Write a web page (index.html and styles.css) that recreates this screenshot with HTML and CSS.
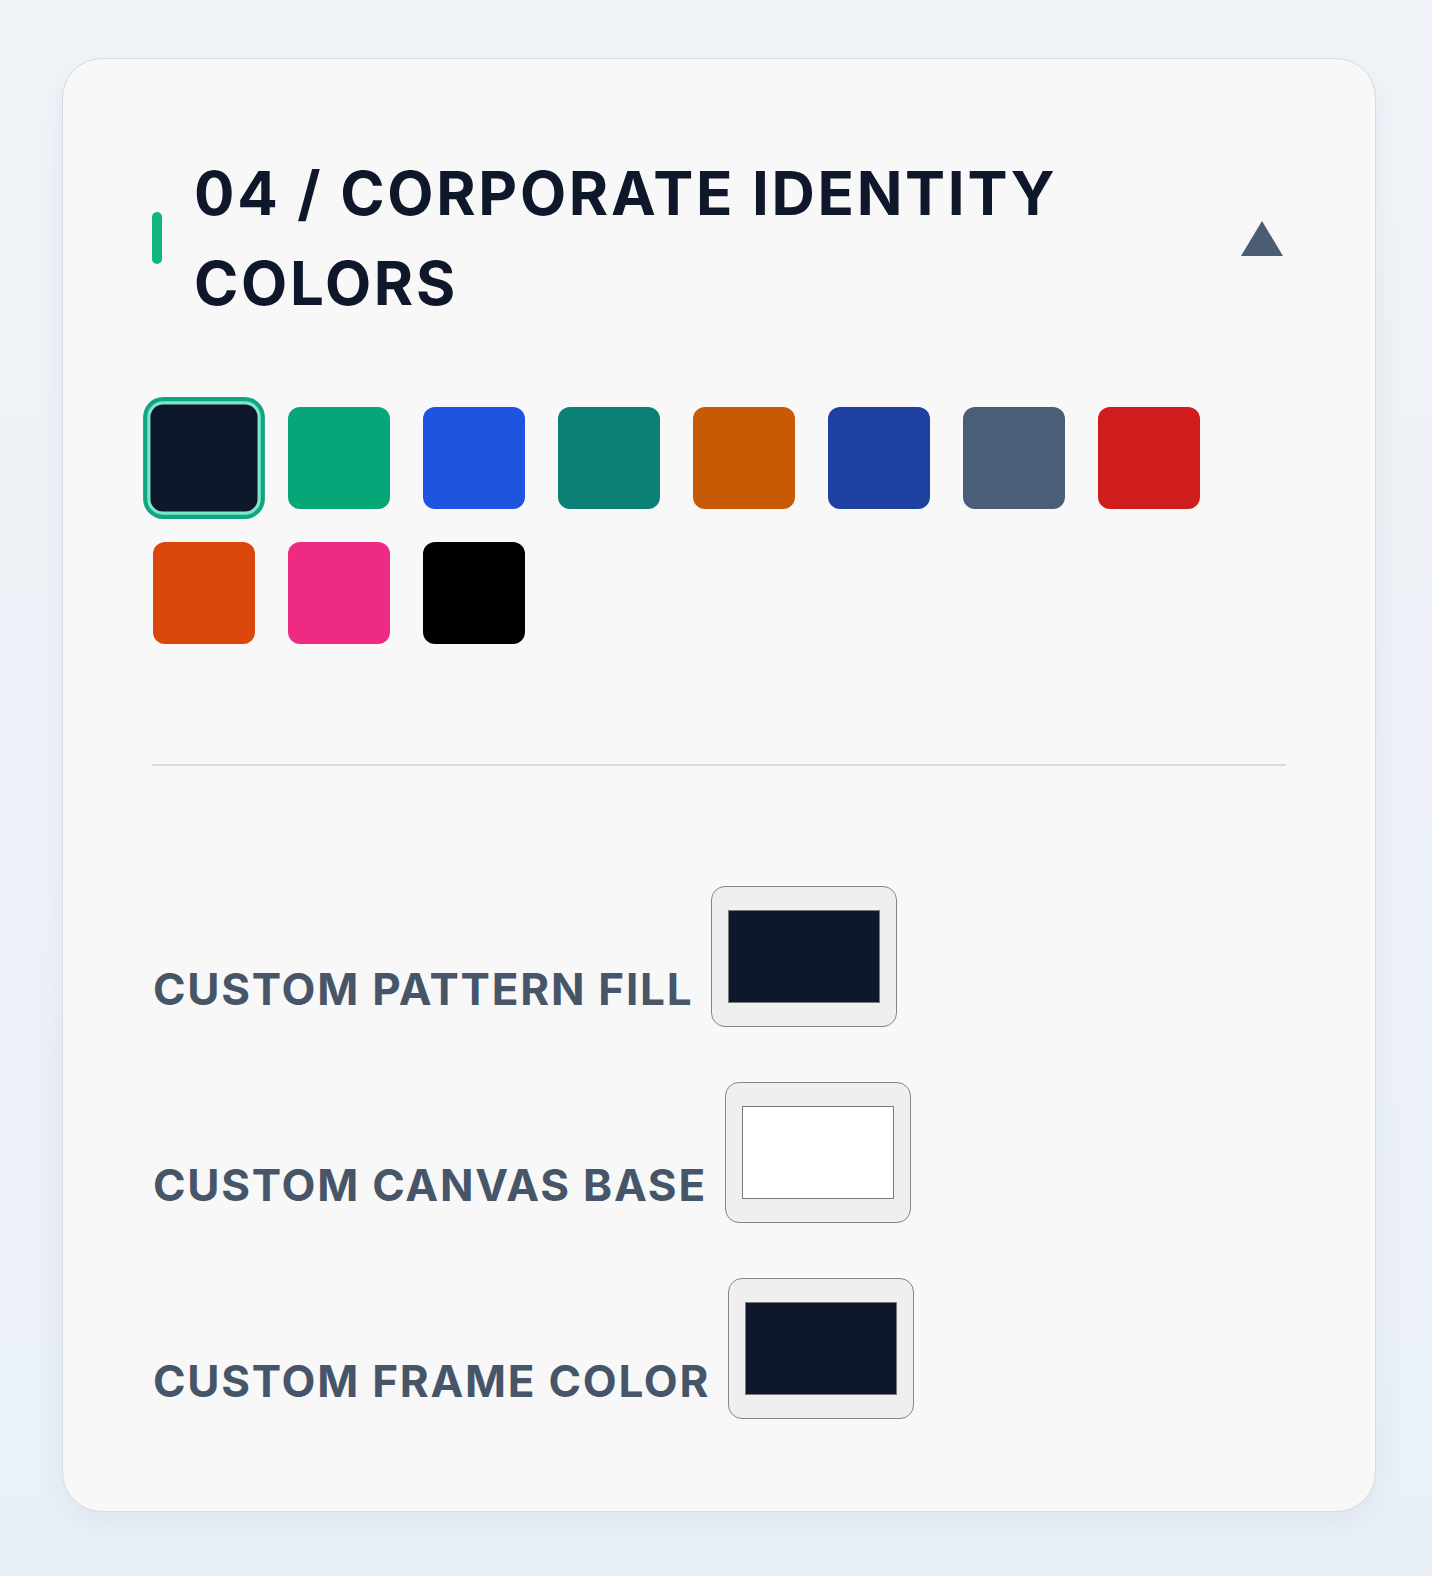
FILE: index.html
```html
<!DOCTYPE html>
<html lang="en">
<head>
  <meta charset="UTF-8">
  <meta name="viewport" content="width=device-width, initial-scale=1.0">
  <title>Corporate Identity Colors</title>
  <link rel="stylesheet" href="styles.css">
</head>
<body>
  <main class="page">
    <section class="card">
      <header class="card-head">
        <span class="accent"></span>
        <h2 class="title">04 / CORPORATE IDENTITY COLORS</h2>
        <button type="button" class="toggle" aria-label="Collapse section">
          <svg width="42" height="35" viewBox="0 0 42 35"><polygon points="21,0 42,35 0,35" fill="#4b5d75"/></svg>
        </button>
      </header>

      <div class="swatches">
        <button type="button" class="swatch active" style="background: #0f172a;"></button>
        <button type="button" class="swatch" style="background: #07a679;"></button>
        <button type="button" class="swatch" style="background: #1d54e0;"></button>
        <button type="button" class="swatch" style="background: #0b8175;"></button>
        <button type="button" class="swatch" style="background: #c85a06;"></button>
        <button type="button" class="swatch" style="background: #1e40a0;"></button>
        <button type="button" class="swatch" style="background: #4b5e77;"></button>
        <button type="button" class="swatch" style="background: #cf1d1d;"></button>
        <button type="button" class="swatch" style="background: #d9480a;"></button>
        <button type="button" class="swatch" style="background: #ee2a83;"></button>
        <button type="button" class="swatch" style="background: #000000;"></button>
      </div>

      <hr class="divider">

      <div class="custom-list">
        <label class="custom-row">
          <span class="custom-label">CUSTOM PATTERN FILL</span>
          <span class="picker"><span class="picker-fill" style="background: #0f172a;"></span></span>
        </label>
        <label class="custom-row">
          <span class="custom-label">CUSTOM CANVAS BASE</span>
          <span class="picker"><span class="picker-fill" style="background: #ffffff;"></span></span>
        </label>
        <label class="custom-row">
          <span class="custom-label">CUSTOM FRAME COLOR</span>
          <span class="picker"><span class="picker-fill" style="background: #0f172a;"></span></span>
        </label>
      </div>
    </section>
  </main>
</body>
</html>
```
FILE: styles.css
```css
body {
  margin: 0;
  padding: 0;
  font-family: Inter, "Noto Sans", sans-serif;
  background: linear-gradient(180deg, #f0f3f7 0%, #eaf0f8 100%);
  color: #0f172a;
  min-height: 1576px;
}
.page {
  padding: 58px 56px 64px 62px;
}
.card {
  background: #f8f8f8;
  border: 1px solid #d6dbe3;
  border-radius: 40px;
  padding: 89px 89px 92px 89px;
  box-shadow: 0 12px 30px rgba(30, 50, 90, 0.06);
}
.card-head {
  display: flex;
  align-items: center;
}
.accent {
  width: 10px;
  height: 52px;
  border-radius: 5px;
  background: #10b47f;
  margin-right: 32px;
  flex: none;
}
.title {
  flex: 1;
  margin: 0;
  font-size: 60px;
  line-height: 90px;
  font-weight: 700;
  letter-spacing: 0.045em;
  color: #0f172a;
}
.toggle {
  background: none;
  border: none;
  padding: 0;
  margin-right: 3px;
  cursor: pointer;
  display: flex;
}
.swatches {
  display: flex;
  flex-wrap: wrap;
  gap: 33px;
  margin-top: 79px;
  padding-left: 1px;
}
.swatch {
  width: 102px;
  height: 102px;
  border: none;
  border-radius: 12px;
  padding: 0;
  cursor: pointer;
}
.swatch.active {
  transform: scale(1.05);
  box-shadow: 0 0 0 3px #7ee8c6, 0 0 0 7px #12a585;
}
.divider {
  border: none;
  height: 2px;
  background: #dadada;
  margin: 120px 0 0;
}
.custom-list {
  display: flex;
  flex-direction: column;
  gap: 55px;
  margin-top: 120px;
  padding-left: 1px;
}
.custom-row {
  display: flex;
  align-items: flex-end;
  gap: 18px;
  cursor: pointer;
}
.custom-label {
  font-size: 44px;
  line-height: 44px;
  font-weight: 700;
  letter-spacing: 0.04em;
  color: #475569;
  padding-bottom: 16px;
}
.picker {
  width: 186px;
  height: 141px;
  box-sizing: border-box;
  border: 1.5px solid #858585;
  border-radius: 14px;
  background: #efefef;
  display: flex;
  align-items: center;
  justify-content: center;
}
.picker-fill {
  width: 152px;
  height: 93px;
  box-sizing: border-box;
  border: 1px solid #7a7a7a;
}
```
